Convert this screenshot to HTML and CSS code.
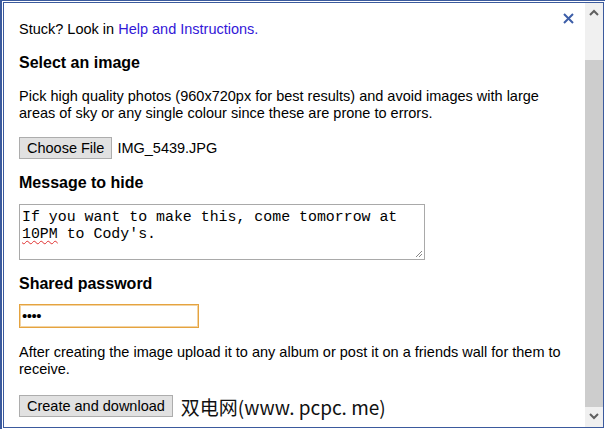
FILE: index.html
```html
<!DOCTYPE html>
<html>
<head>
<meta charset="utf-8">
<link rel="stylesheet" href="styles.css">
</head>
<body>
<div class="outer">
  <div class="window">
    <div class="content">
      <button class="close" aria-label="close">
        <svg width="11" height="11" viewBox="0 0 11 11"><path d="M1 1 L10 10 M10 1 L1 10" stroke="#3d5ea8" stroke-width="2" fill="none"/></svg>
      </button>
      <p class="stuck">Stuck? Look in <a href="#" class="link">Help and Instructions.</a></p>
      <h2 class="h h-select">Select an image</h2>
      <p class="para para-pick">Pick high quality photos (960x720px for best results) and avoid images with large areas of sky or any single colour since these are prone to errors.</p>
      <div class="file-row">
        <span class="btn">Choose File</span>
        <span class="fname">IMG_5439.JPG</span>
      </div>
      <h2 class="h h-msg">Message to hide</h2>
      <div class="textarea"><span>If you want to make this, come tomorrow at</span><br><span class="spell">10PM</span> to Cody's.
        <svg class="grip" width="8" height="8" viewBox="0 0 8 8"><path d="M7 1 L1 7 M7 4 L4 7" stroke="#888" stroke-width="1" fill="none"/></svg>
      </div>
      <h2 class="h h-pass">Shared password</h2>
      <div class="pass">&#8226;&#8226;&#8226;&#8226;</div>
      <p class="para para-after">After creating the image upload it to any album or post it on a friends wall for them to receive.</p>
      <div class="create-row">
        <span class="btn btn-create">Create and download</span>
        <span class="watermark">双电网(www. pcpc. me)</span>
      </div>
    </div>
    <div class="scrollbar">
      <div class="sb-btn">
        <svg width="10" height="7" viewBox="0 0 10 7"><path d="M1 6 L5 2 L9 6" stroke="#606060" stroke-width="2" fill="none"/></svg>
      </div>
      <div class="sb-track"></div>
      <div class="sb-thumb"></div>
      <div class="sb-btn sb-down">
        <svg width="10" height="7" viewBox="0 0 10 7"><path d="M1 1 L5 5 L9 1" stroke="#606060" stroke-width="2" fill="none"/></svg>
      </div>
    </div>
  </div>
</div>
</body>
</html>
```
FILE: styles.css
```css
* { box-sizing: border-box; }
html, body { margin: 0; padding: 0; background: #fff; }
body { font-family: "Liberation Sans", Arial, sans-serif; font-size: 14.5px; color: #000; }

.outer {
  width: 605px;
  height: 429px;
  border-left: 2px solid #3b5a9d;
  border-top: 1px solid #3b5a9d;
  padding: 1px 1px 1px 1px;
}
.window {
  height: 100%;
  border: 1px solid #3b5a9d;
  display: flex;
  background: #fff;
}
.content {
  flex: 1;
  position: relative;
  padding: 18px 10px 0 15px;
  line-height: 17px;
}
.close {
  position: absolute;
  top: 10px;
  right: 11px;
  border: 0;
  background: none;
  padding: 0;
  width: 11px;
  height: 11px;
  display: block;
}
.close svg { display: block; }
.stuck { margin: 0; }
.link { color: #3318d8; text-decoration: none; }
.h {
  margin: 0;
  font-size: 16px;
  font-weight: bold;
  line-height: 19px;
}
.h-select { margin-top: 15px; }
.para { margin: 0; max-width: 548px; }
.para-pick { margin-top: 16px; }
.file-row { margin-top: 15px; display: flex; align-items: center; gap: 5px; }
.btn {
  display: inline-block;
  height: 22px;
  line-height: 20px;
  padding: 0 7px;
  background: #e1e1e1;
  border: 1px solid #adadad;
  color: #000;
}
.fname { line-height: 22px; }
.h-msg { margin-top: 14px; }
.textarea {
  position: relative;
  margin-top: 12px;
  width: 406px;
  height: 56px;
  border: 1px solid #a9a9a9;
  padding: 4px 2px 2px;
  font-family: "Liberation Mono", "Courier New", monospace;
  font-size: 14.9px;
  line-height: 17px;
}
.spell {
  text-decoration: underline wavy #e03030;
  text-decoration-thickness: 1px;
  text-underline-offset: 2px;
}
.grip { position: absolute; right: 1px; bottom: 1px; }
.h-pass { margin-top: 14px; }
.pass {
  margin-top: 11px;
  width: 180px;
  height: 24px;
  border: 1px solid #e5a33f;
  box-shadow: inset 0 0 0 1px #f3d4a3;
  padding: 0 2px;
  line-height: 22px;
  font-size: 15px;
  letter-spacing: -0.5px;
}
.para-after { margin-top: 16px; }
.create-row { margin-top: 16px; display: flex; align-items: center; gap: 8px; }
.watermark {
  font-family: "Noto Sans CJK SC", "Liberation Sans", sans-serif;
  font-size: 19px;
  line-height: 22px;
  color: #111;
  margin-top: 2px;
}

.scrollbar {
  width: 18px;
  display: flex;
  flex-direction: column;
  background: #f0f0f0;
}
.sb-btn {
  height: 17px;
  display: flex;
  align-items: center;
  justify-content: center;
  padding-top: 2px;
}
.sb-down { padding-top: 0; padding-bottom: 2px; height: 20px; }
.sb-track { height: 40px; }
.sb-thumb { flex: 1; background: #cdcdcd; }
```
